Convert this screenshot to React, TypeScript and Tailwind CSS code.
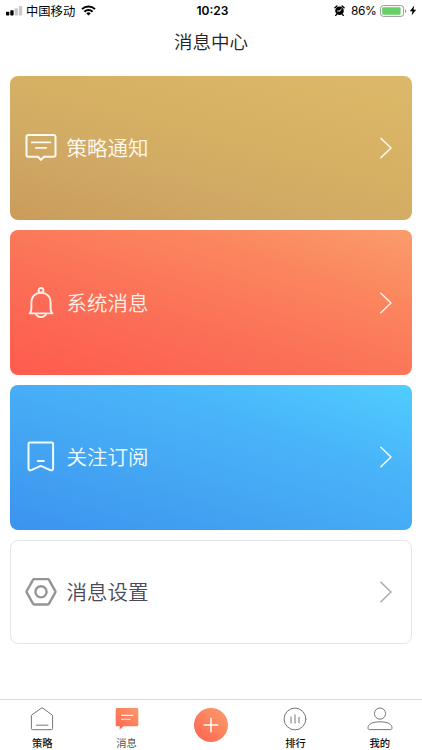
import type { ReactNode } from "react";
import clsx from "clsx";

function MessageIcon() {
  return (
    <svg viewBox="0 0 32 32" className="size-8" fill="none" stroke="currentColor" strokeWidth="2" strokeLinecap="round" strokeLinejoin="round">
      <path d="M3.3 3h25.4a1.8 1.8 0 0 1 1.8 1.8v18.1a1.8 1.8 0 0 1-1.8 1.8H19l-3 3.2-3-3.2H3.3a1.8 1.8 0 0 1-1.8-1.8V4.800A1.8 1.8 0 0 1 3.3 3Z" />
      <path d="M6.800 10.400h18.600M10.800 15.800h10.400" strokeWidth="1.8" />
    </svg>
  );
}

function BellIcon() {
  return (
    <svg viewBox="0 0 32 32" className="size-8" fill="none" stroke="currentColor" strokeWidth="1.9" strokeLinecap="round" strokeLinejoin="round">
      <circle cx="16" cy="3.4" r="2.4" />
      <path d="M4.600 26.400h22.800c-1.400-1.300-1.800-2.700-1.800-4.800v-6.200c0-6-4-9.600-9.600-9.600s-9.600 3.600-9.600 9.600v6.200c0 2.100-.4 3.500-1.800 4.800Z" />
      <path d="M10.900 27c.8 2.100 2.800 3.100 5.100 3.100s4.300-1 5.100-3.100" />
    </svg>
  );
}

function BookmarkIcon() {
  return (
    <svg viewBox="0 0 32 32" className="size-8" fill="none" stroke="currentColor" strokeWidth="2" strokeLinecap="round" strokeLinejoin="round">
      <path d="M5 1.400h21.600a1.500 1.500 0 0 1 1.500 1.500v24.500c0 1.700-1.500 2.300-2.800 1.700L15.800 24.900 6.300 29.100c-1.300.6-2.800 0-2.800-1.700V2.900A1.500 1.500 0 0 1 5 1.400Z" />
      <path d="M12.800 20h6" />
    </svg>
  );
}

function SettingsIcon() {
  return (
    <svg viewBox="0 0 32 32" className="size-8" fill="none" stroke="currentColor" strokeWidth="2.400" strokeLinejoin="round">
      <path d="M9.300 3.100h13.400a1.500 1.500 0 0 1 1.300.7l6.200 11.100a1.700 1.700 0 0 1 0 1.700L24 27.700a1.500 1.500 0 0 1-1.300.8H9.300a1.500 1.500 0 0 1-1.300-.8L1.800 16.600a1.700 1.700 0 0 1 0-1.700L8 3.800a1.500 1.500 0 0 1 1.300-.7Z" />
      <circle cx="16" cy="15.800" r="5.600" />
    </svg>
  );
}

function Chevron() {
  return (
    <svg viewBox="0 0 12 22" className="h-[22px] w-3" fill="none" stroke="currentColor" strokeWidth="1.500" strokeLinecap="round" strokeLinejoin="round">
      <path d="M.9 1.200 11 11 .9 20.800" />
    </svg>
  );
}

const cards = [
  {
    title: "策略通知",
    icon: <MessageIcon />,
    style: "h-[144.5px] bg-[linear-gradient(15deg,#ca9c5b_0%,#d1aa65_35%,#d7b163_60%,#dcb96a_100%)] text-[#fffaf0]",
  },
  {
    title: "系统消息",
    icon: <BellIcon />,
    style: "h-[144.5px] bg-[linear-gradient(18deg,#ff5b4e_0%,#fb6f57_38%,#fb865e_72%,#fa9c6b_100%)] text-[#fff0ea]",
  },
  {
    title: "关注订阅",
    icon: <BookmarkIcon />,
    style: "h-[144.5px] bg-[linear-gradient(18deg,#3b93ee_0%,#44a5f3_35%,#49b5f9_68%,#50cdff_100%)] text-[#effcff]",
  },
  {
    title: "消息设置",
    icon: <SettingsIcon />,
    style: "h-[104px] border border-[#e6e4e8] bg-white text-[#4c4858]",
    plain: true,
  },
];

function StatusBar() {
  return (
    <div className="grid h-[21px] grid-cols-[1fr_auto_1fr] items-center pr-[5px] pl-[6px] text-black">
      <div className="flex items-center">
        <svg viewBox="0 0 17 10" className="h-[10px] w-[17px]">
          <rect x="0" y="5.8" width="3.3" height="3.7" rx=".7" />
          <rect x="4.3" y="4.3" width="3.3" height="5.2" rx=".7" />
          <rect x="8.6" y="2.2" width="3.3" height="7.3" rx=".7" fill="#c9c9c9" />
          <rect x="12.9" y="0" width="3.3" height="9.5" rx=".7" fill="#c9c9c9" />
        </svg>
        <span className="ml-[3px] pt-0.5 text-[12.3px] leading-[18px]">中国移动</span>
        <svg viewBox="0 0 15 11" className="ml-[6px] h-[11px] w-[15px]" fill="none" stroke="currentColor" strokeWidth="2">
          <path d="M1 4.1a9.3 9.3 0 0 1 13 0" />
          <path d="M3.4 6.7a5.9 5.9 0 0 1 8.2 0" />
          <path d="m7.5 10.6-2.2-2.2a3.2 3.2 0 0 1 4.4 0Z" fill="currentColor" stroke="none" />
        </svg>
      </div>
      <span className="pl-[2px] font-[Inter] text-[12px] font-semibold">10:23</span>
      <div className="flex items-center justify-end">
        <svg viewBox="0 0 12 12" className="mr-[6px] size-[11px]">
          <circle cx="6" cy="6.3" r="4.7" />
          <path d="M1 3.1 3.2 1M11 3.1 8.8 1M2.8 10.2l-.9 1.2M9.2 10.2l.9 1.2" stroke="#000" strokeWidth="1.5" strokeLinecap="round" />
          <path d="M6.3 6.5 8 4.3M6.3 6.5H4" stroke="#fff" strokeWidth="1" strokeLinecap="round" />
        </svg>
        <span className="font-[Inter] text-[12px] tracking-[-0.4px]">86%</span>
        <svg viewBox="0 0 27 12" className="ml-[3.5px] h-3 w-[27px]">
          <rect x=".6" y=".6" width="23" height="10.8" rx="2.7" fill="none" stroke="#999" />
          <rect x="2.2" y="2.2" width="18.4" height="7.6" rx="1" fill="#66d065" />
          <path d="M25 4v4c1.6-.7 1.6-3.3 0-4Z" fill="#999" />
        </svg>
        <svg viewBox="0 0 8 11" className="ml-[2px] h-[11px] w-2">
          <path d="M5.3.5.8 6.2h2.7l-.9 4.3 4.6-5.7H4.5Z" />
        </svg>
      </div>
    </div>
  );
}

function TabItem({ label, active, children }: { label: string; active?: boolean; children: ReactNode }) {
  return (
    <div className="flex flex-1 flex-col items-center pt-[7px]">
      {children}
      <span className={clsx("mt-[5px] text-[10.3px] leading-[14px]", active ? "text-[#555]" : "font-medium text-[#111]")}>
        {label}
      </span>
    </div>
  );
}

function TabBar() {
  return (
    <nav className="flex h-[51px] border-t border-[#dadada] bg-white">
      <TabItem label="策略">
        <svg viewBox="0 0 26 24" className="h-6 w-[26px]" fill="none" stroke="#777" strokeWidth="1" strokeLinejoin="round">
          <path d="M2.4 8.3 12.2 1.2a1.4 1.4 0 0 1 1.6 0l9.8 7.1v13.2a1.2 1.2 0 0 1-1.2 1.2H3.6a1.2 1.2 0 0 1-1.2-1.2Z" />
          <path d="M7 18.2h12.4" />
        </svg>
      </TabItem>
      <TabItem label="消息" active>
        <svg viewBox="0 0 26 24" className="h-6 w-[26px]">
          <defs>
            <linearGradient id="bubble" x1="0" y1="1" x2="1" y2="0">
              <stop stopColor="#ff654f" />
              <stop offset="1" stopColor="#f99a6c" />
            </linearGradient>
          </defs>
          <path d="M3 1h20a1.3 1.3 0 0 1 1.3 1.3v15.6a1.3 1.3 0 0 1-1.3 1.3H9.4L5.6 22.4V19.2H3a1.3 1.3 0 0 1-1.3-1.3V2.3A1.3 1.3 0 0 1 3 1Z" fill="url(#bubble)" />
          <path d="M7.6 8.4h11.2M7.6 12.3h8.6" stroke="#fff0e8" strokeWidth="1.1" strokeLinecap="round" />
        </svg>
      </TabItem>
      <div className="flex flex-1 items-center justify-center">
        <button aria-label="新建" className="flex size-[34px] items-center justify-center rounded-full bg-linear-to-tr from-[#ff5f50] to-[#f99d6c]">
          <svg viewBox="0 0 16 16" className="size-4" stroke="#fff" strokeWidth="1.5" strokeLinecap="round">
            <path d="M8 1.2v13.6M1.2 8h13.6" />
          </svg>
        </button>
      </div>
      <TabItem label="排行">
        <svg viewBox="0 0 26 24" className="h-6 w-[26px]" fill="none" stroke="#777" strokeWidth="1" strokeLinecap="round">
          <circle cx="13" cy="12" r="10.9" />
          <path d="M9 10v6M13 7.8v8.400M17 10.300v5.700" />
        </svg>
      </TabItem>
      <TabItem label="我的">
        <svg viewBox="0 0 26 24" className="h-6 w-[26px]" fill="none" stroke="#777" strokeWidth="1">
          <circle cx="13" cy="6.6" r="5.6" />
          <path d="M1 21c0-4 4.7-6.200 12-6.200S25 17 25 21c0 1-.5 1.600-1.500 1.600h-21C1.500 22.600 1 22 1 21Z" />
        </svg>
      </TabItem>
    </nav>
  );
}

export default function App() {
  return (
    <div className="flex h-[750px] w-[422px] flex-col overflow-hidden bg-white font-['Inter','Noto_Sans_CJK_SC',sans-serif]">
      <StatusBar />
      <header className="flex h-[43px] items-center justify-center pt-px text-[18.5px] font-[350] text-[#222]">
        消息中心
      </header>
      <main className="flex flex-1 flex-col gap-[10.3px] px-[10.3px] pt-[11.5px]">
        {cards.map((card) => (
          <section
            key={card.title}
            className={clsx("flex shrink-0 items-center rounded-[8px]", card.style, card.plain ? "pr-[18.7px] pl-[13.7px]" : "pr-[19.7px] pl-[14.7px]")}
          >
            <span className={card.plain ? "text-[#959595]" : ""}>{card.icon}</span>
            <h2 className="ml-[9.5px] flex-1 pt-[2px] text-[20.5px] leading-7 font-[350]">{card.title}</h2>
            <span className={card.plain ? "text-[#aaa]" : ""}>
              <Chevron />
            </span>
          </section>
        ))}
      </main>
      <TabBar />
    </div>
  );
}
